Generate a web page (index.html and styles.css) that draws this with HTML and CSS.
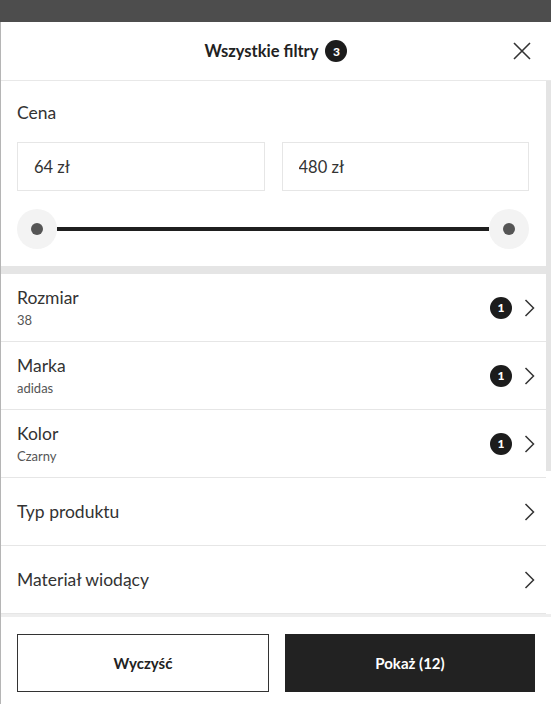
FILE: index.html
```html
<!DOCTYPE html>
<html lang="pl">

<head>
    <meta charset="UTF-8">
    <meta name="viewport" content="width=device-width, initial-scale=1.0">
    <title>Wszystkie filtry</title>
    <link rel="stylesheet" href="styles.css">
</head>

<body>
    <div class="backdrop"></div>

    <div class="panel">
        <!-- Header -->
        <div class="panel-header">
            <div class="panel-title">
                <span>Wszystkie filtry</span>
                <span class="badge badge-title">3</span>
            </div>
            <button class="close-button" type="button" aria-label="Zamknij">
                <svg width="18" height="18" viewBox="0 0 18 18">
                    <path d="M1 1 L17 17 M17 1 L1 17" stroke="#333" stroke-width="1.6" fill="none" />
                </svg>
            </button>
        </div>

        <!-- Scrollable filters -->
        <div class="panel-body">
            <div class="filters">
                <div class="price-section">
                    <div class="section-label">Cena</div>
                    <div class="price-inputs">
                        <input type="text" class="price-input" value="64 zł">
                        <input type="text" class="price-input" value="480 zł">
                    </div>
                    <div class="slider">
                        <span class="slider-thumb"><span class="slider-dot"></span></span>
                        <span class="slider-track"></span>
                        <span class="slider-thumb"><span class="slider-dot"></span></span>
                    </div>
                </div>

                <div class="filter-row">
                    <div class="filter-text">
                        <div class="filter-name">Rozmiar</div>
                        <div class="filter-value">38</div>
                    </div>
                    <span class="badge">1</span>
                    <svg class="chevron" width="11" height="18" viewBox="0 0 11 18">
                        <polyline points="1.5,1 9.5,9 1.5,17" />
                    </svg>
                </div>

                <div class="filter-row">
                    <div class="filter-text">
                        <div class="filter-name">Marka</div>
                        <div class="filter-value">adidas</div>
                    </div>
                    <span class="badge">1</span>
                    <svg class="chevron" width="11" height="18" viewBox="0 0 11 18">
                        <polyline points="1.5,1 9.5,9 1.5,17" />
                    </svg>
                </div>

                <div class="filter-row">
                    <div class="filter-text">
                        <div class="filter-name">Kolor</div>
                        <div class="filter-value">Czarny</div>
                    </div>
                    <span class="badge">1</span>
                    <svg class="chevron" width="11" height="18" viewBox="0 0 11 18">
                        <polyline points="1.5,1 9.5,9 1.5,17" />
                    </svg>
                </div>

                <div class="filter-row">
                    <div class="filter-text">
                        <div class="filter-name">Typ produktu</div>
                    </div>
                    <svg class="chevron" width="11" height="18" viewBox="0 0 11 18">
                        <polyline points="1.5,1 9.5,9 1.5,17" />
                    </svg>
                </div>

                <div class="filter-row">
                    <div class="filter-text">
                        <div class="filter-name">Materiał wiodący</div>
                    </div>
                    <svg class="chevron" width="11" height="18" viewBox="0 0 11 18">
                        <polyline points="1.5,1 9.5,9 1.5,17" />
                    </svg>
                </div>
            </div>

            <div class="scrollbar">
                <div class="scrollbar-thumb"></div>
            </div>
        </div>

        <!-- Footer buttons -->
        <div class="panel-footer">
            <button type="button" class="clear-button">Wyczyść</button>
            <button type="button" class="show-button">Pokaż (12)</button>
        </div>
    </div>
</body>

</html>
```

FILE: styles.css
```css
body {
    font-family: Lato, "Noto Sans", sans-serif;
    margin: 0;
    padding: 0;
    height: 704px;
    display: flex;
    flex-direction: column;
    background-color: #ffffff;
    color: #333333;
    overflow: hidden;
}

.backdrop {
    height: 22px;
    background-color: #4d4d4d;
    flex-shrink: 0;
}

.panel {
    flex: 1;
    display: flex;
    flex-direction: column;
    border-left: 1px solid #b5b5b5;
    min-height: 0;
}

.panel-header {
    height: 58px;
    flex-shrink: 0;
    display: flex;
    align-items: center;
    justify-content: center;
    border-bottom: 1px solid #e8e8e8;
    padding-left: 38px;
    padding-right: 20px;
}

.panel-title {
    flex: 1;
    display: flex;
    align-items: center;
    justify-content: center;
    gap: 7px;
    font-size: 16.5px;
    font-weight: 700;
    color: #222222;
}

.close-button {
    background: none;
    border: none;
    padding: 0;
    width: 18px;
    height: 18px;
    cursor: pointer;
    display: flex;
}

.badge {
    width: 22px;
    height: 22px;
    border-radius: 50%;
    background-color: #1c1c1c;
    color: #ffffff;
    font-size: 12px;
    font-weight: 900;
    display: flex;
    align-items: center;
    justify-content: center;
    flex-shrink: 0;
}

.panel-body {
    flex: 1;
    display: flex;
    min-height: 0;
    overflow: hidden;
}

.filters {
    flex: 1;
    display: flex;
    flex-direction: column;
}

.scrollbar {
    width: 5px;
    flex-shrink: 0;
}

.scrollbar-thumb {
    height: 390px;
    background-color: #e4e4e4;
}

.price-section {
    padding: 22px 17px 17px 16px;
    border-bottom: 8px solid #e5e5e5;
}

.section-label {
    font-size: 17.5px;
    line-height: 20px;
    color: #333333;
}

.price-inputs {
    display: flex;
    gap: 17px;
    margin-top: 19px;
}

.price-input {
    flex: 1;
    min-width: 0;
    height: 49px;
    box-sizing: border-box;
    border: 1px solid #e6e6e6;
    padding: 0 16px;
    font-family: inherit;
    font-size: 16.5px;
    color: #333333;
    outline: none;
}

.slider {
    display: flex;
    align-items: center;
    margin-top: 18px;
    height: 40px;
}

.slider-thumb {
    width: 40px;
    height: 40px;
    border-radius: 50%;
    background-color: #f3f3f3;
    display: flex;
    align-items: center;
    justify-content: center;
    flex-shrink: 0;
}

.slider-dot {
    width: 12px;
    height: 12px;
    border-radius: 50%;
    background-color: #555555;
}

.slider-track {
    flex: 1;
    height: 4px;
    background-color: #1f1f1f;
}

.filter-row {
    height: 67px;
    display: flex;
    align-items: center;
    gap: 12px;
    padding: 0 11px 0 16px;
    border-bottom: 1px solid #e6e6e6;
    flex-shrink: 0;
}

.filter-text {
    flex: 1;
}

.filter-name {
    font-size: 17.5px;
    line-height: 22px;
    color: #333333;
}

.filter-value {
    font-size: 13px;
    line-height: 16px;
    margin-top: 3px;
    color: #555555;
}

.chevron polyline {
    fill: none;
    stroke: #333333;
    stroke-width: 1.5;
}

.panel-footer {
    flex-shrink: 0;
    display: flex;
    gap: 16px;
    padding: 17px 16px 12px 16px;
    border-top: 3px solid #eeeeee;
}

.panel-footer button {
    flex: 1;
    height: 58px;
    font-family: inherit;
    font-size: 15px;
    font-weight: 700;
    cursor: pointer;
}

.clear-button {
    background-color: #ffffff;
    color: #222222;
    border: 1px solid #333333;
}

.show-button {
    background-color: #222222;
    color: #ffffff;
    border: none;
}
```
